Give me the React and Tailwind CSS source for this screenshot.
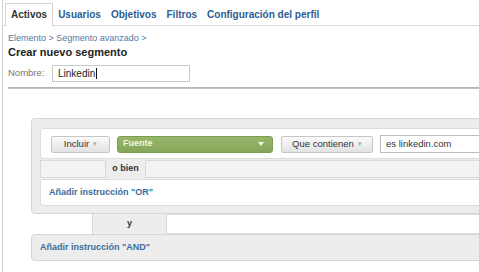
import React from "react";

function Btn({ label, w }) {
  return (
    <div
      className={`${w} h-[17px] flex items-center justify-center gap-[4px] border border-[#c6c6c6] rounded-[2px] bg-gradient-to-b from-[#fbfbfb] to-[#e2e2e2] text-[9.5px] text-[#333] shrink-0`}
    >
      <span>{label}</span>
      <span className="text-[7px] text-[#aaa]">▾</span>
    </div>
  );
}

export default function App() {
  return (
    <div className="w-[480px] h-[272px] bg-white overflow-hidden font-['Liberation_Sans',Arial,sans-serif]">
      <div className="ml-[2px] w-[478px] h-[272px] border-x border-[#d2d2d2] overflow-hidden flex flex-col">
        {/* Tabs */}
        <div className="h-[26px] shrink-0 border-b border-[#d9d9d9] flex items-end pl-[2px] text-[10px] font-bold">
          <div className="h-[23px] px-[5px] flex items-center bg-white border border-b-0 border-[#d4d4d4] text-[#333] -mb-px pb-px">
            Activos
          </div>
          <div className="h-[22px] px-[5px] flex items-center text-[#2d5c94]">Usuarios</div>
          <div className="h-[22px] px-[5px] flex items-center text-[#2d5c94]">Objetivos</div>
          <div className="h-[22px] px-[5px] flex items-center text-[#2d5c94]">Filtros</div>
          <div className="h-[22px] px-[5px] flex items-center text-[#2d5c94]">Configuración del perfil</div>
        </div>

        {/* Header area */}
        <div className="pl-[5px] shrink-0">
          <div className="mt-[7px] text-[9px] leading-[11px] text-[#5679a8]">
            Elemento &gt; Segmento avanzado &gt;
          </div>
          <div className="mt-[1px] text-[11px] leading-[14px] font-bold text-[#222]">
            Crear nuevo segmento
          </div>
          <div className="mt-[6px] flex items-center h-[17px]">
            <span className="w-[44px] text-[9.5px] text-[#777]">Nombre:</span>
            <div className="w-[138px] h-[17px] border border-[#c8c8c8] bg-white flex items-center pl-[5px] text-[10px] text-[#222]">
              Linkedin
              <span className="inline-block w-px h-[11px] bg-[#111] ml-px" />
            </div>
          </div>
          <div className="mt-[5px] h-[2px] bg-[#c4c4c4] border-t border-dotted border-[#a8a8a8]" />
        </div>

        {/* Segment panel */}
        <div className="ml-[28px] mt-[29px] w-[480px] shrink-0">
          <div className="border border-[#d6d6d6] bg-[#ededed] rounded-[4px] pt-[9px] pb-[7px] pl-[8px]">
            <div className="h-[31px] bg-white border border-[#dcdcdc] rounded-[3px] flex items-center pl-[10px] pt-px">
              <Btn label="Incluir" w="w-[59px]" />
              <div className="ml-[7px] w-[156px] h-[17px] shrink-0 rounded-[3px] border border-[#7c9b53] bg-gradient-to-b from-[#97b66b] to-[#86a75a] flex items-center justify-between pl-[5px] pr-[8px]">
                <span className="text-[9px] font-bold text-[#eef7dc]">Fuente</span>
                <svg width="6" height="4" viewBox="0 0 6 4">
                  <path d="M0 0 L6 0 L3 4 Z" fill="#f4f8ec" />
                </svg>
              </div>
              <div className="ml-[8px]">
                <Btn label="Que contienen" w="w-[92px]" />
              </div>
              <div className="ml-[7px] w-[120px] h-[18px] border border-[#bdbdbd] bg-white flex items-center pl-[5px] text-[9.5px] text-[#333] shrink-0">
                es linkedin.com
              </div>
            </div>
            <div className="h-[20px] flex items-stretch">
              <div className="w-[66px] my-px bg-[#f3f3f3] border border-[#dadada]" />
              <div className="w-[39px] flex items-center justify-center text-[9px] font-bold text-[#333]">
                o bien
              </div>
              <div className="flex-1 my-px bg-[#f3f3f3] border border-[#dadada]" />
            </div>
            <div className="h-[27px] bg-white border border-[#dcdcdc] rounded-[3px] flex items-center pl-[8px] text-[9px] font-bold text-[#3b6b9e]">
              Añadir instrucción "OR"
            </div>
          </div>

          <div className="h-[20px] flex items-stretch">
            <div className="w-[61px] bg-white" />
            <div className="w-[75px] bg-[#ededed] border-x border-[#dadada] flex items-center justify-center text-[9px] font-bold text-[#333]">
              y
            </div>
            <div className="flex-1 bg-white border-y border-[#dadada]" />
          </div>

          <div className="h-[27px] border border-[#d6d6d6] bg-[#ededed] rounded-[4px] flex items-center pl-[8px] text-[9px] font-bold text-[#3b6b9e]">
            Añadir instrucción "AND"
          </div>
        </div>
      </div>
    </div>
  );
}
